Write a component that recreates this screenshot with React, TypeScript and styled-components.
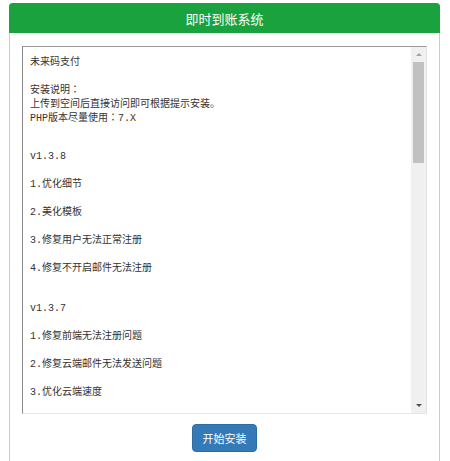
import React from "react";
import styled, { createGlobalStyle } from "styled-components";

const GlobalStyle = createGlobalStyle`
  html, body {
    margin: 0;
    padding: 0;
    background: #ffffff;
    overflow: hidden;
  }
`;

const Page = styled.div`
  padding: 3px 10px 0 9px;
  height: 461px;
  box-sizing: border-box;
`;

const Panel = styled.section`
  width: 431px;
  height: 480px;
  box-sizing: border-box;
  border: 1px solid #bccfe0;
  border-top: none;
  border-radius: 4px 4px 0 0;
  background: #ffffff;
`;

const Header = styled.header`
  height: 30px;
  margin: 0 -1px;
  display: flex;
  align-items: center;
  justify-content: center;
  background: #19a23e;
  border-radius: 4px 4px 0 0;
  color: #ffffff;
  font-family: "Noto Sans CJK SC", "Noto Sans", sans-serif;
  font-size: 13px;
`;

const Body = styled.div`
  padding: 13px 12px 0;
  display: flex;
  flex-direction: column;
  align-items: center;
  gap: 10px;
`;

const TextBox = styled.div`
  width: 405px;
  height: 368px;
  box-sizing: border-box;
  display: flex;
  border-style: solid;
  border-width: 1px;
  border-color: #9a9a9a #e2e2e2 #e6e6e6 #8a8a8a;
  background: #ffffff;
`;

const Content = styled.div`
  flex: 1;
  overflow: hidden;
  padding: 9px 7px;
  font-family: "Liberation Mono", "Noto Sans CJK SC", monospace;
  font-size: 10px;
  line-height: 14px;
  color: #333333;
`;

const Line = styled.div<{ $gap?: number }>`
  height: 14px;
  margin-top: ${(p) => p.$gap ?? 0}px;
  white-space: pre;
`;

// full-width colon sits centred in its box, as in the original font
const Colon = styled.span`
  font-family: "Noto Sans CJK JP", monospace;
  line-height: 0;
`;

const ScrollBar = styled.div`
  width: 15px;
  display: flex;
  flex-direction: column;
  background: #f0f0f0;
`;

const Arrow = styled.div<{ $down?: boolean; $dim?: boolean }>`
  height: 15px;
  display: flex;
  align-items: center;
  justify-content: center;

  &::after {
    content: "";
    border-left: 3px solid transparent;
    border-right: 3px solid transparent;
    ${(p) =>
      p.$down
        ? `border-top: 3px solid ${p.$dim ? "#a3a3a3" : "#505050"};`
        : `border-bottom: 3px solid ${p.$dim ? "#a3a3a3" : "#505050"};`}
  }
`;

const Track = styled.div`
  flex: 1;
  padding: 0 2px;
`;

const Thumb = styled.div`
  height: 101px;
  background: #c1c1c1;
`;

const InstallButton = styled.button`
  width: 65px;
  height: 28px;
  border: 1px solid #2e6da4;
  border-radius: 4px;
  background: #337ab7;
  color: #ffffff;
  font-family: "Noto Sans CJK SC", "Noto Sans", sans-serif;
  font-size: 11px;
  padding: 0;
  cursor: pointer;
`;

type Entry = { text: string; gap?: number };

const entries: Entry[] = [
  { text: "未来码支付" },
  { text: "安装说明：", gap: 14 },
  { text: "上传到空间后直接访问即可根据提示安装。" },
  { text: "PHP版本尽量使用：7.X" },
  { text: "v1.3.8", gap: 24 },
  { text: "1.优化细节", gap: 14 },
  { text: "2.美化模板", gap: 14 },
  { text: "3.修复用户无法正常注册", gap: 14 },
  { text: "4.修复不开启邮件无法注册", gap: 14 },
  { text: "v1.3.7", gap: 26 },
  { text: "1.修复前端无法注册问题", gap: 14 },
  { text: "2.修复云端邮件无法发送问题", gap: 14 },
  { text: "3.优化云端速度", gap: 14 },
  { text: "", gap: 14 },
];

const renderText = (text: string) =>
  text.split("：").map((part, i) => (
    <React.Fragment key={i}>
      {i > 0 && <Colon>：</Colon>}
      {part}
    </React.Fragment>
  ));

const App: React.FC = () => {
  return (
    <>
      <GlobalStyle />
      <Page>
        <Panel>
          <Header>即时到账系统</Header>
          <Body>
            <TextBox>
              <Content>
                {entries.map((e, i) => (
                  <Line key={i} $gap={e.gap}>
                    {renderText(e.text)}
                  </Line>
                ))}
              </Content>
              <ScrollBar>
                <Arrow $dim />
                <Track>
                  <Thumb />
                </Track>
                <Arrow $down />
              </ScrollBar>
            </TextBox>
            <InstallButton>开始安装</InstallButton>
          </Body>
        </Panel>
      </Page>
    </>
  );
};

export default App;
